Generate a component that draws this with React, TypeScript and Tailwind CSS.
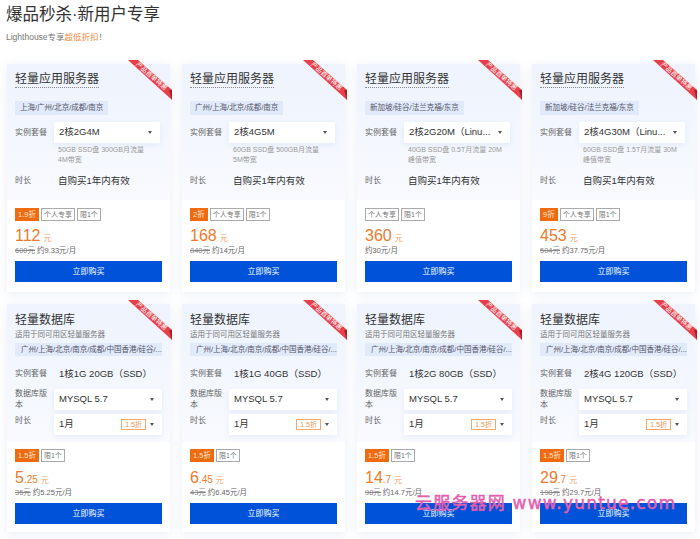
const FONT = "font-['Liberation_Sans','Noto_Sans_CJK_SC',sans-serif]";

const servers = [
  { region: '上海/广州/北京/成都/南京', plan: '2核2G4M', spec: ['50GB SSD盘 300GB月流量', '4M带宽'], badge: '1.9折', tags: ['个人专享', '限1个'], price: '112', old: '600元', monthly: '约9.33元/月' },
  { region: '广州/上海/北京/成都/南京', plan: '2核4G5M', spec: ['60GB SSD盘 500GB月流量', '5M带宽'], badge: '2折', tags: ['个人专享', '限1个'], price: '168', old: '840元', monthly: '约14元/月' },
  { region: '新加坡/硅谷/法兰克福/东京', plan: '2核2G20M（Linu...', spec: ['40GB SSD盘 0.5T月流量 20M', '峰值带宽'], badge: '', tags: ['个人专享', '限1个'], price: '360', old: '', monthly: '约30元/月' },
  { region: '新加坡/硅谷/法兰克福/东京', plan: '2核4G30M（Linu...', spec: ['60GB SSD盘 1.5T月流量 30M', '峰值带宽'], badge: '9折', tags: ['个人专享', '限1个'], price: '453', old: '504元', monthly: '约37.75元/月' },
];

const databases = [
  { plan: '1核1G 20GB（SSD）', whole: '5', cents: '.25', old: '35元', monthly: '约5.25元/月' },
  { plan: '1核1G 40GB（SSD）', whole: '6', cents: '.45', old: '43元', monthly: '约6.45元/月' },
  { plan: '1核2G 80GB（SSD）', whole: '14', cents: '.7', old: '98元', monthly: '约14.7元/月' },
  { plan: '2核4G 120GB（SSD）', whole: '29', cents: '.7', old: '198元', monthly: '约29.7元/月' },
];

function Ribbon() {
  return (
    <div className="absolute -top-[4px] -right-[3px] w-[45px] h-[40px]">
      <svg width="45" height="40" viewBox="0 0 45 40" className="absolute inset-0">
        <polygon points="0,0 10,0 44,30 44,40" fill="#e8404a" />
        <polygon points="41,30 44,30 44,40" fill="#a81f28" />
      </svg>
      <span className="absolute left-[4px] top-[12px] w-[38px] text-center text-[6.5px] leading-[8px] text-white rotate-[41deg] whitespace-nowrap">
        产品首单特惠
      </span>
    </div>
  );
}

function Caret() {
  return <span className="w-0 h-0 border-x-[2.5px] border-x-transparent border-t-[3px] border-t-[#555]" />;
}

function Select({ text, off }: { text: string; off?: boolean }) {
  return (
    <div className="flex-1 min-w-0 h-[21px] bg-white shadow-[0_2px_6px_rgba(40,80,160,0.08)] flex items-center justify-between pl-[5px] pr-[8px] text-[9.5px] text-[#333]">
      <span className="whitespace-nowrap">{text}</span>
      <span className="flex items-center gap-[4px]">
        {off && <span className="border border-[#f5a76a] text-[#f0954f] text-[7px] leading-[9px] px-[3px]">1.5折</span>}
        <Caret />
      </span>
    </div>
  );
}

function Tags({ badge, tags }: { badge: string; tags: string[] }) {
  return (
    <div className="flex gap-[2px] h-[13px]">
      {badge && <span className="bg-[#f06a0f] text-[#ffe9d8] text-[7.5px] leading-[13px] px-[3px] min-w-[11px]">{badge}</span>}
      {tags.map(t => (
        <span key={t} className="border border-[#aaa] text-[#777] text-[7px] leading-[11px] px-[2px]">{t}</span>
      ))}
    </div>
  );
}

function Buy() {
  return (
    <button className="mt-[5px] w-full h-[21px] bg-[#0052d9] text-white text-[8px] flex items-center justify-center">
      立即购买
    </button>
  );
}

function Card({ children }: { children: React.ReactNode }) {
  return <div className="relative bg-white shadow-[0_2px_10px_rgba(60,90,160,0.1)]">{children}<Ribbon /></div>;
}

function ServerCard({ item }: { item: (typeof servers)[number] }) {
  return (
    <Card>
      <div className="h-[136px] bg-gradient-to-b from-[#eef3fd] to-[#f8faff] px-[8px] pt-[7px]">
        <h3 className="w-fit text-[12px] leading-[16px] text-[#333] border-b border-dotted border-[#888]">轻量应用服务器</h3>
        <div className="mt-[13px] h-[14px] w-fit bg-[#e1eafb] px-[5px] text-[7.5px] leading-[14px] text-[#556]">{item.region}</div>
        <div className="mt-[7px] flex items-start">
          <span className="w-[39px] text-[8px] leading-[21px] text-[#666]">实例套餐</span>
          <div className="flex-1 mr-[2px] flex"><Select text={item.plan} /></div>
        </div>
        <div className="ml-[43px] mt-[2px] text-[7px] leading-[10px] text-[#999]">
          {item.spec.map(s => <div key={s}>{s}</div>)}
        </div>
        <div className="mt-[8px] flex items-center h-[16px]">
          <span className="w-[43px] text-[8px] text-[#666]">时长</span>
          <span className="text-[9.5px] text-[#333]">自购买1年内有效</span>
        </div>
      </div>
      <div className="h-[92px] px-[8px] pt-[8px]">
        <Tags badge={item.badge} tags={item.tags} />
        <div className="mt-[6px] h-[18px] flex items-baseline text-[#ee7a2c]">
          <span className="text-[16px] leading-[18px]">{item.price}</span>
          <span className="ml-[3px] text-[8px] text-[#f0a06a]">元</span>
        </div>
        <div className="h-[11px] text-[7.5px] leading-[11px] text-[#666] whitespace-nowrap">
          {item.old && <span className="line-through text-[#888] mr-[2px]">{item.old}</span>}
          {item.monthly}
        </div>
        <Buy />
      </div>
    </Card>
  );
}

function DbCard({ item }: { item: (typeof databases)[number] }) {
  return (
    <Card>
      <div className="h-[138px] bg-gradient-to-b from-[#eef3fd] to-[#f8faff] px-[8px] pt-[8px]">
        <h3 className="text-[12px] leading-[16px] text-[#333]">轻量数据库</h3>
        <div className="mt-[1px] text-[7.5px] leading-[11px] text-[#777]">适用于同可用区轻量服务器</div>
        <div className="mt-[3px] h-[13px] bg-[#e1eafb] px-[6px] text-[7.5px] leading-[13px] text-[#556] whitespace-nowrap overflow-hidden">
          广州/上海/北京/南京/成都/中国香港/硅谷/...
        </div>
        <div className="mt-[11px] flex items-center h-[14px]">
          <span className="w-[44px] text-[8px] text-[#666]">实例套餐</span>
          <span className="text-[9.5px] text-[#333] whitespace-nowrap">{item.plan}</span>
        </div>
        <div className="mt-[7px] flex items-center">
          <span className="w-[39px] text-[8px] leading-[11px] text-[#666]">数据库版本</span>
          <Select text="MYSQL 5.7" />
        </div>
        <div className="mt-[4px] flex items-start">
          <span className="w-[39px] text-[8px] leading-[14px] text-[#666]">时长</span>
          <Select text="1月" off />
        </div>
      </div>
      <div className="h-[90px] px-[8px] pt-[7px]">
        <Tags badge="1.5折" tags={['限1个']} />
        <div className="mt-[7px] h-[18px] flex items-baseline text-[#ee7a2c]">
          <span className="text-[16px] leading-[18px]">{item.whole}</span>
          <span className="text-[10px]">{item.cents}</span>
          <span className="ml-[3px] text-[8px] text-[#f0a06a]">元</span>
        </div>
        <div className="h-[11px] text-[7.5px] leading-[11px] text-[#666] whitespace-nowrap">
          <span className="line-through text-[#888] mr-[2px]">{item.old}</span>
          {item.monthly}
        </div>
        <Buy />
      </div>
    </Card>
  );
}

export default function App() {
  return (
    <div className={`${FONT} relative w-[700px] h-[539px] overflow-hidden bg-white pl-[7px]`}>
      <h1 className="pt-[2px] -ml-[1px] text-[16.5px] leading-[24px] text-[#333]">爆品秒杀·新用户专享</h1>
      <p className="mt-[5px] -ml-[1px] text-[8.5px] leading-[12px] text-[#777]">
        Lighthouse专享<span className="text-[#f08a3c]">超低折扣</span>！
      </p>
      <div className="mt-[21px] grid grid-cols-[repeat(4,163px)] gap-x-[12px] gap-y-[12px]">
        {servers.map(s => <ServerCard key={s.plan} item={s} />)}
        {databases.map(d => <DbCard key={d.plan} item={d} />)}
      </div>
      <div className="absolute left-[415px] top-[492px] text-[17px] leading-[22px] tracking-[1.2px] text-[#e25fb0] [-webkit-text-stroke:0.5px_#e25fb0] font-['DejaVu_Sans','Noto_Sans_CJK_SC',sans-serif] whitespace-nowrap">
        云服务器网 www.yuntue.com
      </div>
    </div>
  );
}
